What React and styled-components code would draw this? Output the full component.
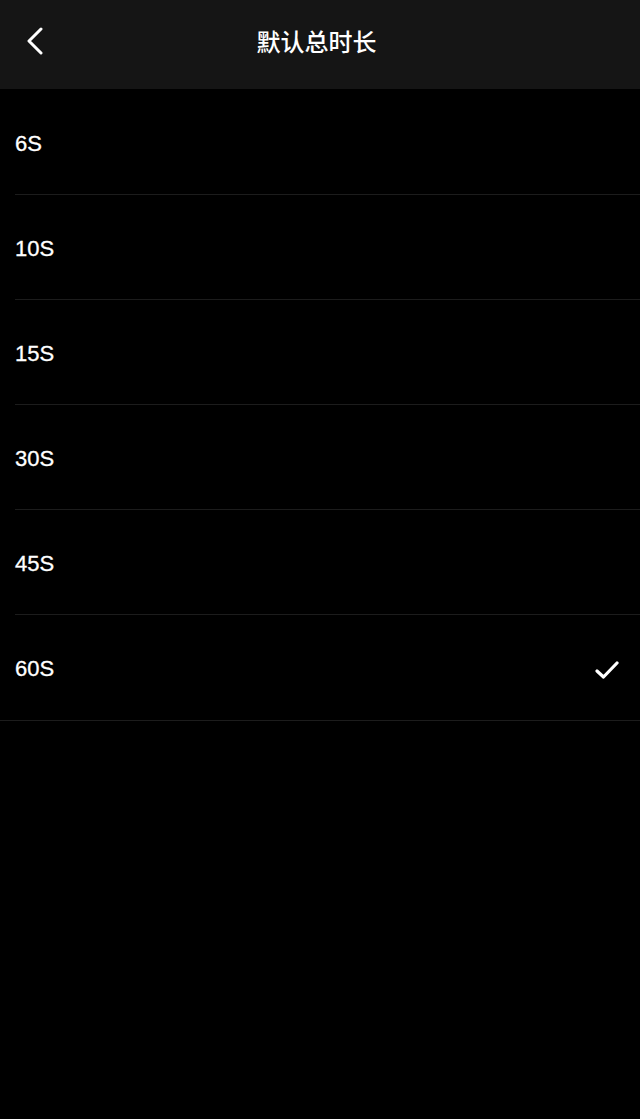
import styled, { createGlobalStyle } from 'styled-components';

const OPTIONS = ['6S', '10S', '15S', '30S', '45S', '60S'];
const SELECTED = '60S';

export default function App() {
  return (
    <>
      <GlobalStyle />
      <Page>
        <Header>
          <BackButton aria-label="返回">
            <svg width="18" height="28" viewBox="0 0 18 28" fill="none">
              <path
                d="M15 2L3 14L15 26"
                stroke="#fff"
                strokeWidth="3"
                strokeLinecap="round"
                strokeLinejoin="round"
              />
            </svg>
          </BackButton>
          <Title>默认总时长</Title>
        </Header>
        <List>
          {OPTIONS.map((opt, i) => (
            <Item key={opt} $last={i === OPTIONS.length - 1}>
              <Label>{opt}</Label>
              {opt === SELECTED && (
                <Check>
                  <svg width="24" height="20" viewBox="0 0 24 20" fill="none">
                    <path
                      d="M2 11L8.5 17L22 3"
                      stroke="#fff"
                      strokeWidth="3.2"
                      strokeLinecap="round"
                      strokeLinejoin="round"
                    />
                  </svg>
                </Check>
              )}
            </Item>
          ))}
        </List>
      </Page>
    </>
  );
}

const GlobalStyle = createGlobalStyle`
  html, body {
    margin: 0;
    padding: 0;
    background: #000;
  }
  body {
    font-family: "Liberation Sans", "Noto Sans CJK SC", sans-serif;
    color: #fff;
  }
`;

const Page = styled.div`
  min-height: 1119px;
  background: #000;
  display: flex;
  flex-direction: column;
`;

// 顶部导航
const Header = styled.div`
  position: relative;
  height: 89px;
  background: #151515;
  display: flex;
  align-items: center;
  justify-content: center;
  flex-shrink: 0;
`;

const BackButton = styled.div`
  position: absolute;
  left: 26px;
  top: 27px;
  display: flex;
`;

const Title = styled.div`
  font-family: "Noto Sans CJK SC", sans-serif;
  font-size: 24px;
  font-weight: 500;
  color: #fff;
  margin-left: -7px;
  margin-top: -8px;
`;

// 选项列表
const List = styled.div`
  display: flex;
  flex-direction: column;
  padding-top: 1px;
`;

const Item = styled.div`
  height: ${(p) => (p.$last ? '106px' : '105px')};
  box-sizing: border-box;
  display: flex;
  align-items: center;
  padding: 2px 21px 0 15px;
  position: relative;
  border-bottom: ${(p) => (p.$last ? '1px solid #1c1c1c' : 'none')};

  &::after {
    content: '';
    display: ${(p) => (p.$last ? 'none' : 'block')};
    position: absolute;
    left: 15px;
    right: 0;
    bottom: 0;
    height: 1px;
    background: #1c1c1c;
  }
`;

const Label = styled.div`
  font-size: 22px;
  color: #fff;
  flex: 1;
  -webkit-text-stroke: 0.3px #fff;
`;

const Check = styled.div`
  display: flex;
  margin-top: 2px;
`;
